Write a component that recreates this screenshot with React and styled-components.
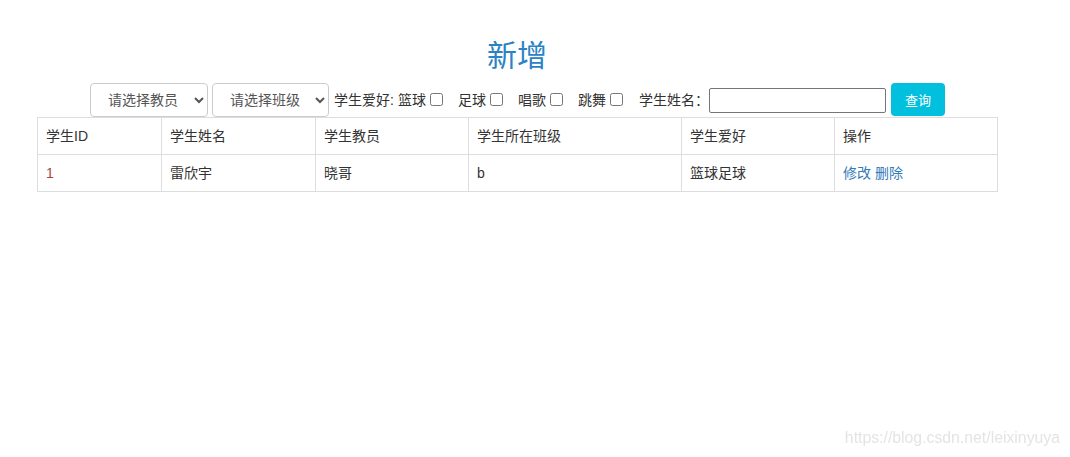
import React from "react";
import styled, { createGlobalStyle } from "styled-components";

const GlobalStyle = createGlobalStyle`
  html, body {
    margin: 0;
    background: #fff;
  }
  body {
    font-family: "Liberation Sans", "Noto Sans CJK SC", sans-serif;
    font-size: 14px;
    line-height: 20px;
    color: #333;
  }
`;

const students = [
  { id: 1, name: "雷欣宇", teacher: "晓哥", clazz: "b", hobby: "篮球足球" },
];

const hobbies = ["篮球", "足球", "唱歌", "跳舞"];

const columns = [
  { label: "学生ID", width: 124 },
  { label: "学生姓名", width: 154 },
  { label: "学生教员", width: 153 },
  { label: "学生所在班级", width: 213 },
  { label: "学生爱好", width: 153 },
  { label: "操作", width: 163 },
];

const App = () => {
  return (
    <>
      <GlobalStyle />
      <Page>
        <Title>新增</Title>
        <Toolbar>
          <Select defaultValue="">
            <option value="">请选择教员</option>
            <option value="1">晓哥</option>
          </Select>
          <Select defaultValue="" $gap={4} $width={117}>
            <option value="">请选择班级</option>
            <option value="b">b</option>
          </Select>
          <Label $gap={5}>学生爱好:</Label>
          {hobbies.map((h, i) => (
            <Hobby key={h} $first={i === 0}>
              {h}
              <Check type="checkbox" />
            </Hobby>
          ))}
          <Label $gap={13}>学生姓名：</Label>
          <NameInput type="text" />
          <SearchButton>查询</SearchButton>
        </Toolbar>
        <Table>
          <colgroup>
            {columns.map((c) => (
              <col key={c.label} width={c.width} />
            ))}
          </colgroup>
          <thead>
            <tr>
              {columns.map((c) => (
                <Th key={c.label}>{c.label}</Th>
              ))}
            </tr>
          </thead>
          <tbody>
            {students.map((s) => (
              <tr key={s.id}>
                <Td $id>{s.id}</Td>
                <Td>{s.name}</Td>
                <Td>{s.teacher}</Td>
                <Td>{s.clazz}</Td>
                <Td>{s.hobby}</Td>
                <Td>
                  <ActionLink href="#">修改</ActionLink>{" "}
                  <ActionLink href="#">删除</ActionLink>
                </Td>
              </tr>
            ))}
          </tbody>
        </Table>
      </Page>
      <Watermark>https://blog.csdn.net/leixinyuya</Watermark>
    </>
  );
};

const Page = styled.div`
  width: 960px;
  margin-left: 37px;
  padding-top: 39px;
`;

const Title = styled.h2`
  margin: 0 0 11px;
  font-size: 30px;
  line-height: 33px;
  font-weight: 400;
  text-align: center;
  color: #2b82c4;
`;

const Toolbar = styled.div`
  display: flex;
  justify-content: center;
  align-items: center;
  height: 34px;
  padding-left: 1px;
`;

const Select = styled.select`
  box-sizing: border-box;
  width: ${(p) => p.$width || 118}px;
  height: 34px;
  margin: 0 0 0 ${(p) => p.$gap || 0}px;
  padding: 0 4px 0 13px;
  border: 1px solid #ccc;
  border-radius: 4px;
  background: #fff;
  font-family: "Liberation Sans", "Noto Sans CJK SC", sans-serif;
  font-size: 14px;
  color: #555;
`;

const Label = styled.span`
  margin-left: ${(p) => p.$gap || 0}px;
  white-space: nowrap;
`;

const Hobby = styled.label`
  display: flex;
  align-items: center;
  margin-left: ${(p) => (p.$first ? 4 : 12)}px;
  white-space: nowrap;
`;

const Check = styled.input`
  width: 13px;
  height: 13px;
  margin: 0 3px 2px 4px;
`;

const NameInput = styled.input`
  box-sizing: border-box;
  width: 177px;
  height: 25px;
  margin: 0;
  padding: 1px 2px;
  border: 1px solid #767676;
  border-radius: 2px;
  font-size: 14px;
`;

const SearchButton = styled.button`
  box-sizing: border-box;
  width: 54px;
  height: 33px;
  margin: 0 0 1px 5px;
  padding: 0;
  border: none;
  border-radius: 4px;
  background: #00c0de;
  color: #fff;
  font-family: "Liberation Sans", "Noto Sans CJK SC", sans-serif;
  font-size: 13px;
  cursor: pointer;
`;

const Table = styled.table`
  width: 960px;
  table-layout: fixed;
  border-collapse: collapse;
  border: 1px solid #ddd;
`;

const Th = styled.th`
  padding: 8px;
  border: 1px solid #ddd;
  text-align: left;
  font-weight: 400;
  line-height: 20px;
  color: #333;
`;

const Td = styled.td`
  padding: 8px;
  border: 1px solid #ddd;
  line-height: 20px;
  color: ${(p) => (p.$id ? "#a94442" : "#333")};
`;

const ActionLink = styled.a`
  color: #337ab7;
  text-decoration: none;
`;

const Watermark = styled.div`
  position: fixed;
  right: 10px;
  bottom: 9px;
  font-family: "Liberation Sans", sans-serif;
  font-size: 15.8px;
  color: #e4e4e4;
  pointer-events: none;
`;

export default App;
